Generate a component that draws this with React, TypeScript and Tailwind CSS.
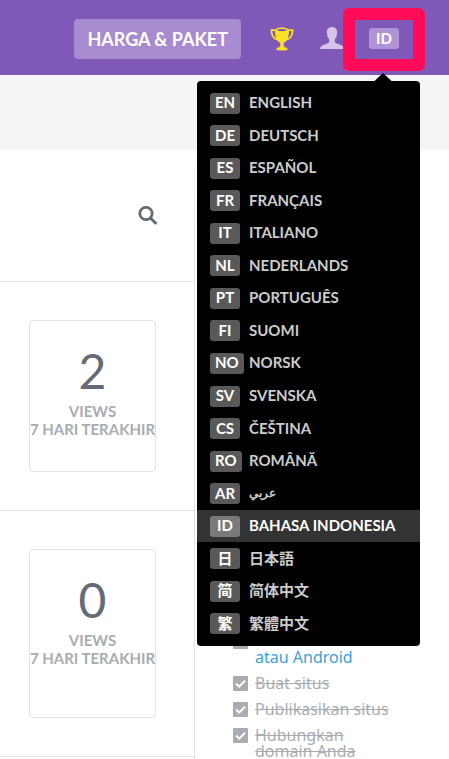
import { useState } from 'react';

interface Language {
  code: string;
  badge: string;
  name: string;
}

const LANGUAGES: Language[] = [
  { code: 'en', badge: 'EN', name: 'ENGLISH' },
  { code: 'de', badge: 'DE', name: 'DEUTSCH' },
  { code: 'es', badge: 'ES', name: 'ESPAÑOL' },
  { code: 'fr', badge: 'FR', name: 'FRANÇAIS' },
  { code: 'it', badge: 'IT', name: 'ITALIANO' },
  { code: 'nl', badge: 'NL', name: 'NEDERLANDS' },
  { code: 'pt', badge: 'PT', name: 'PORTUGUÊS' },
  { code: 'fi', badge: 'FI', name: 'SUOMI' },
  { code: 'no', badge: 'NO', name: 'NORSK' },
  { code: 'sv', badge: 'SV', name: 'SVENSKA' },
  { code: 'cs', badge: 'CS', name: 'ČEŠTINA' },
  { code: 'ro', badge: 'RO', name: 'ROMÂNĂ' },
  { code: 'ar', badge: 'AR', name: 'عربي' },
  { code: 'id', badge: 'ID', name: 'BAHASA INDONESIA' },
  { code: 'ja', badge: '日', name: '日本語' },
  { code: 'zh-Hans', badge: '简', name: '简体中文' },
  { code: 'zh-Hant', badge: '繁', name: '繁體中文' }
];

const TASKS = ['Buat situs', 'Publikasikan situs', 'Hubungkan domain Anda'];

function TrophyIcon() {
  return (
    <svg className="h-6 w-6" viewBox="0 0 24 24" fill="#f7e025">
      <path
        fillRule="evenodd"
        d="M6 2.2C6.6 1 9 .5 12 .5s5.400.5 6 1.700h5.500c0 5.800-1.800 9.800-6.900 11.300-.9 1.200-1.900 2.100-2.900 2.600v2.700c0 .9.8 1.300 2.100 1.700 1.300.4 1.900 1.100 1.900 2.100 0 .6-2.300 1-5.700 1s-5.700-.4-5.700-1c0-1 .6-1.700 1.900-2.100 1.300-.4 2.100-.8 2.100-1.700v-2.700c-1-.5-2-1.400-2.900-2.600C2.300 12 .5 8 .5 2.200H6ZM2.300 3.900c.3 3.400 1.400 6 3.900 7.300-.8-2.100-1.200-4.600-1.200-7.300H2.300Zm16.700 0c0 2.700-.4 5.200-1.200 7.300 2.500-1.300 3.600-3.900 3.900-7.300H19ZM7.200 3c.4.800 2.300 1.200 4.800 1.200s4.400-.4 4.800-1.200c-.4-.7-2.300-1.100-4.800-1.100S7.600 2.300 7.200 3Z"
      />
    </svg>
  );
}

function UserIcon() {
  return (
    <svg className="h-6 w-6" viewBox="0 0 24 24" fill="#d3c4e8">
      <path d="M12 0c3.300 0 5.200 2.200 5.100 5.200 0 3.200-.9 5.600-2.300 7.200v2.300c0 .9.800 1.300 2.700 2 4 1.300 6.300 2.200 6.300 5.300H.2c0-3.100 2.300-4 6.300-5.300 1.900-.7 2.700-1.100 2.700-2v-2.300C7.800 10.800 6.900 8.400 6.900 5.200 6.800 2.200 8.700 0 12 0Z" />
    </svg>
  );
}

function SearchIcon() {
  return (
    <svg className="h-5 w-5" viewBox="0 0 20 20" fill="none" stroke="#646b76">
      <circle cx="8" cy="7.500" r="6.200" strokeWidth="2.800" />
      <path d="M12.500 12 17.500 17" strokeWidth="3" strokeLinecap="round" />
    </svg>
  );
}

function LanguageMenu({ current, onSelect }: { current: string; onSelect: (code: string) => void }) {
  return (
    <div className="absolute top-[53px] -right-[21px] z-10 w-[223px]">
      <svg className="absolute -top-2 right-7 h-2 w-[18px]" viewBox="0 0 18 8">
        <path d="M9 0 17.500 8H.5Z" fill="#000" />
      </svg>
      <ul className="grid h-[565px] auto-rows-fr rounded bg-black py-1.5">
        {LANGUAGES.map((lang) => {
          const active = lang.code === current;
          return (
            <li key={lang.code} lang={lang.code}>
              <button
                type="button"
                onClick={() => onSelect(lang.code)}
                className={`flex h-full w-full items-center pl-[13px] text-[15px] leading-5 font-bold whitespace-nowrap ${
                  active ? 'bg-[#333333] text-white' : 'text-[#cccccc]'
                }`}
              >
                <span className="flex w-[39px] shrink-0">
                  <span
                    className={`flex h-[21px] min-w-[30px] items-center justify-center rounded-[3px] px-[5px] pb-0.5 text-white ${
                      active ? 'bg-[#7a7a7a]' : 'bg-[#595959]'
                    }`}
                  >
                    {lang.badge}
                  </span>
                </span>
                <span className={`pb-0.5 ${lang.code === 'ar' ? 'text-xs' : ''}`}>{lang.name}</span>
              </button>
            </li>
          );
        })}
      </ul>
    </div>
  );
}

function StatSection({ value, tall = false }: { value: number; tall?: boolean }) {
  return (
    <section className="border-b border-[#e1e2e5] py-[38px] pr-[38px] pl-[29px]">
      <div
        className={`rounded border border-[#e1e2e5] pt-6 text-center ${tall ? 'h-[169px]' : 'h-[152px]'}`}
      >
        <p className="text-5xl leading-[52px] font-normal text-[#646b76]">{value}</p>
        <p className="mt-[5px] flex flex-col items-center text-[15px] leading-[18px] font-bold whitespace-nowrap text-[#a7adb2]">
          <span>VIEWS</span>
          <span>7 HARI TERAKHIR</span>
        </p>
      </div>
    </section>
  );
}

function Tick() {
  return (
    <span className="grid h-4 shrink-0 items-center">
      <input
        type="checkbox"
        defaultChecked
        className="col-start-1 row-start-1 h-[15px] w-[15px] appearance-none rounded-[1px] bg-[#a7adb2]"
      />
      <svg
        className="pointer-events-none col-start-1 row-start-1 h-[15px] w-[15px]"
        viewBox="0 0 15 15"
        fill="none"
        stroke="#fff"
        strokeWidth="2"
      >
        <path d="m3 7.500 3.200 3.200L12 4.800" />
      </svg>
    </span>
  );
}

export default function App() {
  const [language, setLanguage] = useState('id');
  const current = LANGUAGES.find((lang) => lang.code === language);

  return (
    <div className="flex min-h-screen flex-col bg-white font-['Lato','Noto_Sans_CJK_JP',sans-serif]">
      <header className="flex h-[75px] items-center justify-end bg-[#8059b8] pt-[2px] pr-[50px]">
        <button
          type="button"
          className="h-10 rounded bg-[#a68bd0] px-[13px] text-[18px] leading-6 font-bold whitespace-nowrap text-white"
        >
          HARGA &amp; PAKET
        </button>
        <button type="button" aria-label="Trophy" className="ml-[29px]">
          <TrophyIcon />
        </button>
        <button type="button" aria-label="Account" className="ml-[26px]">
          <UserIcon />
        </button>
        <div className="relative ml-[25px]">
          <button
            type="button"
            className="block h-[21px] w-[30px] rounded-[3px] bg-[#af94d6] pb-0.5 text-[15px] leading-5 font-bold text-white"
          >
            {current?.badge}
          </button>
          <div className="pointer-events-none absolute -top-5 -right-[26px] h-[63px] w-[82px] rounded-md border-[12px] border-[#ff0b57]" />
          <LanguageMenu current={language} onSelect={setLanguage} />
        </div>
      </header>

      <div className="h-[75px] bg-[#f5f5f5]" />

      <main className="flex flex-1">
        <div className="w-[194px] shrink-0">
          <div className="flex h-[132px] items-center justify-end border-b border-[#e1e2e5] pr-9">
            <button type="button" aria-label="Search">
              <SearchIcon />
            </button>
          </div>
          <StatSection value={2} />
          <StatSection value={0} tall />
        </div>
        <div className="w-px shrink-0 bg-linear-to-b from-white to-[#e1e2e5] to-15%" />

        <ul className="flex flex-1 flex-col justify-end gap-[10px] pr-[50px] pl-[38px] font-['Noto_Sans','Open_Sans',sans-serif] text-base leading-4 text-[#a7adb2]">
          <li className="flex gap-[7px]">
            <Tick />
            <a href="#app" className="pt-4 text-[#3ba1da]">
              atau Android
            </a>
          </li>
          {TASKS.map((task) => (
            <li key={task}>
              <label className="flex gap-[7px]">
                <Tick />
                <span className="line-through">{task}</span>
              </label>
            </li>
          ))}
        </ul>
      </main>
    </div>
  );
}
